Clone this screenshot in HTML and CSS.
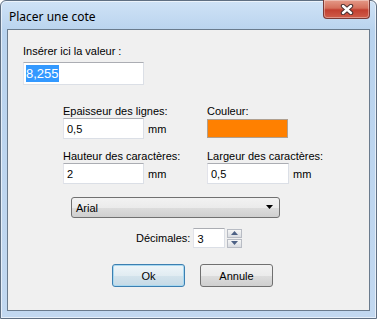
FILE: index.html
```html
<!DOCTYPE html>
<html lang="fr">
<head>
    <meta charset="UTF-8">
    <title>Placer une cote</title>
    <link rel="stylesheet" href="styles.css">
</head>
<body>
    <div class="window">
        <div class="titlebar">
            <span class="title">Placer une cote</span>
            <div class="close">
                <svg width="14" height="11" viewBox="0 0 14 11">
                    <path d="M3 2 L11 9 M11 2 L3 9" stroke="#4a3030" stroke-width="4.4" stroke-linecap="round"/>
                    <path d="M3 2 L11 9 M11 2 L3 9" stroke="#ffffff" stroke-width="2.4" stroke-linecap="round"/>
                </svg>
            </div>
        </div>
        <div class="client">
            <div class="main-field">
                <label class="lbl">Insérer ici la valeur :</label>
                <div class="input big"><span class="sel">8,255</span></div>
            </div>

            <div class="grid">
                <div class="cell">
                    <label class="lbl">Epaisseur des lignes:</label>
                    <div class="row">
                        <div class="input w81">0,5</div>
                        <span class="unit">mm</span>
                    </div>
                </div>
                <div class="cell">
                    <label class="lbl">Couleur:</label>
                    <div class="swatch"></div>
                </div>
                <div class="cell">
                    <label class="lbl">Hauteur des caractères:</label>
                    <div class="row">
                        <div class="input w81">2</div>
                        <span class="unit">mm</span>
                    </div>
                </div>
                <div class="cell">
                    <label class="lbl">Largeur des caractères:</label>
                    <div class="row">
                        <div class="input w82">0,5</div>
                        <span class="unit">mm</span>
                    </div>
                </div>
            </div>

            <div class="combo">
                <span>Arial</span>
                <svg width="8" height="5" viewBox="0 0 8 5"><path d="M0 0 H7 L3.5 4 Z" fill="#000"/></svg>
            </div>

            <div class="decimals">
                <span class="lbl">Décimales:</span>
                <div class="input small">3</div>
                <div class="spin">
                    <div class="spin-btn"><svg width="7" height="4" viewBox="0 0 7 4"><path d="M0 4 H7 L3.5 0 Z" fill="#4d6185"/></svg></div>
                    <div class="spin-btn"><svg width="7" height="4" viewBox="0 0 7 4"><path d="M0 0 H7 L3.5 4 Z" fill="#4d6185"/></svg></div>
                </div>
            </div>

            <div class="buttons">
                <button class="btn default">Ok</button>
                <button class="btn">Annule</button>
            </div>
        </div>
    </div>
</body>
</html>
```

FILE: styles.css
```css
html, body {
    margin: 0;
    padding: 0;
    background: #ffffff;
}
.window {
    width: 377px;
    height: 319px;
    box-sizing: border-box;
    border: 1px solid #5f6f82;
    border-radius: 6px 6px 0 0;
    background: linear-gradient(to bottom, #cfe2f6 0px, #b9d3ee 30px, #c2d8f0 100%);
    box-shadow: inset 0 0 0 1px rgba(255, 255, 255, 0.6);
    padding: 0 6px 7px 6px;
    display: flex;
    flex-direction: column;
    font-family: "Liberation Sans", Arial, sans-serif;
    font-size: 11px;
    color: #000;
}
.titlebar {
    height: 28px;
    display: flex;
    justify-content: space-between;
    align-items: flex-start;
}
.title {
    font-family: "Noto Sans", "Open Sans", sans-serif;
    font-size: 12px;
    margin: 7px 0 0 2px;
    color: #000;
}
.close {
    width: 45px;
    height: 18px;
    margin-top: -1px;
    border: 1px solid #7a3a36;
    border-top: none;
    border-radius: 0 0 4px 4px;
    background: linear-gradient(to bottom, #e49a88 0%, #d5705c 45%, #c23f30 55%, #cf5d4a 100%);
    box-shadow: inset 0 0 0 1px rgba(255, 255, 255, 0.35);
    display: flex;
    align-items: center;
    justify-content: center;
}
.client {
    flex: 1;
    background: #f0f0f0;
    border: 1px solid #6a7b8d;
    display: flex;
    flex-direction: column;
}
.lbl {
    display: block;
    line-height: 13px;
}
.main-field {
    margin: 15px 0 0 15px;
}
.input {
    box-sizing: border-box;
    height: 21px;
    background: #fff;
    border: 1px solid #dbdfe6;
    border-top-color: #abadb3;
    border-left-color: #e2e3ea;
    padding: 3px 0 0 3px;
    line-height: 14px;
}
.input.big {
    width: 121px;
    height: 23px;
    margin-top: 4px;
    padding: 3px 0 0 2px;
    font-size: 13px;
    line-height: 15px;
}
.sel {
    background: #3399ff;
    color: #fff;
    padding: 1px 0;
}
.grid {
    display: grid;
    grid-template-columns: 144px 160px;
    row-gap: 11px;
    margin: 20px 0 0 55px;
}
.row {
    display: flex;
    align-items: center;
}
.w81 { width: 81px; }
.w82 { width: 82px; }
.unit {
    margin-left: 4px;
}
.swatch {
    box-sizing: border-box;
    width: 81px;
    height: 19px;
    margin-top: 1px;
    background: #ff8000;
    border: 1px solid #b0a090;
}
.combo {
    box-sizing: border-box;
    width: 209px;
    height: 21px;
    margin: 13px 0 0 63px;
    border: 1px solid #707070;
    border-radius: 3px;
    background: linear-gradient(to bottom, #f2f2f2 0%, #ebebeb 50%, #dddddd 51%, #cfcfcf 100%);
    display: flex;
    align-items: center;
    justify-content: space-between;
    padding: 0 5px 0 4px;
}
.decimals {
    display: flex;
    align-items: center;
    margin: 10px 0 0 128px;
}
.decimals .lbl {
    margin-right: 3px;
}
.input.small {
    width: 32px;
    height: 20px;
}
.spin {
    display: flex;
    flex-direction: column;
    gap: 1px;
    margin-left: 2px;
}
.spin-btn {
    box-sizing: border-box;
    width: 15px;
    height: 9px;
    border: 1px solid #b8bcc4;
    background: linear-gradient(to bottom, #f6f6f6, #dadde2);
    display: flex;
    align-items: center;
    justify-content: center;
}
.buttons {
    display: flex;
    gap: 15px;
    margin: 16px 0 0 104px;
}
.btn {
    box-sizing: border-box;
    width: 73px;
    height: 23px;
    border: 1px solid #707070;
    border-radius: 3px;
    background: linear-gradient(to bottom, #f2f2f2 0%, #ebebeb 50%, #dddddd 51%, #cfcfcf 100%);
    font-family: "Liberation Sans", Arial, sans-serif;
    font-size: 11px;
    padding: 0;
    color: #000;
}
.btn.default {
    border-color: #3c7fb1;
    background: linear-gradient(to bottom, #eef5f9 0%, #e1ecf2 50%, #d3e3ec 51%, #c6dae6 100%);
    box-shadow: inset 0 0 0 1px #a8d8f0;
}
```
